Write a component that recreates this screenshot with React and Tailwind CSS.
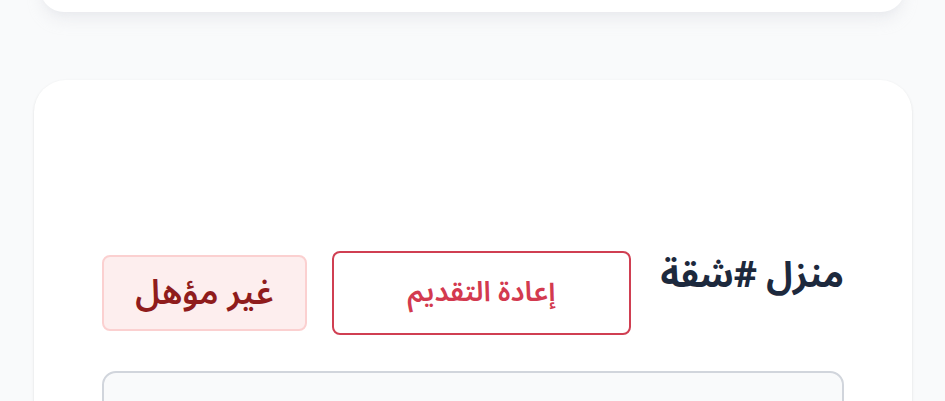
import React from 'react';

export default function App() {
  return (
    <div
      className="min-h-screen w-full overflow-hidden bg-gray-50"
      style={{ fontFamily: '"Noto Sans Arabic", "Noto Kufi Arabic", "DejaVu Sans", sans-serif' }}
      dir="rtl"
    >
      {/* previous card, only its bottom edge shows */}
      <div className="mx-[40px] -mt-[200px] h-[212px] rounded-3xl bg-white shadow-lg shadow-gray-200/70" />

      {/* listing card */}
      <div className="mt-[68px] mx-[33px] ml-[34px] rounded-[32px] bg-white px-[68px] pt-[171px] pb-10 shadow-sm">
        <div className="flex items-start justify-between gap-[26px]">
          <h2 className="mt-[2px] text-[36px] font-bold leading-[1.3] text-slate-800">منزل #شقة</h2>
          <div className="flex items-center gap-[25px]">
            <button className="flex h-[84px] w-[299px] items-center justify-center rounded-lg border-2 border-[#d03f52] bg-white text-[28px] font-semibold leading-none text-[#d33a4f]">
              إعادة التقديم
            </button>
            <span className="flex h-[76px] w-[205px] items-center justify-center rounded-lg border-2 border-[#fbd0d0] bg-[#fdeeee] text-[34px] font-semibold leading-none text-[#8f1c1c]">
              غير مؤهل
            </span>
          </div>
        </div>

        <div className="mt-[36px] h-[160px] rounded-[14px] border-2 border-gray-300 bg-gray-50" />
      </div>
    </div>
  );
}
